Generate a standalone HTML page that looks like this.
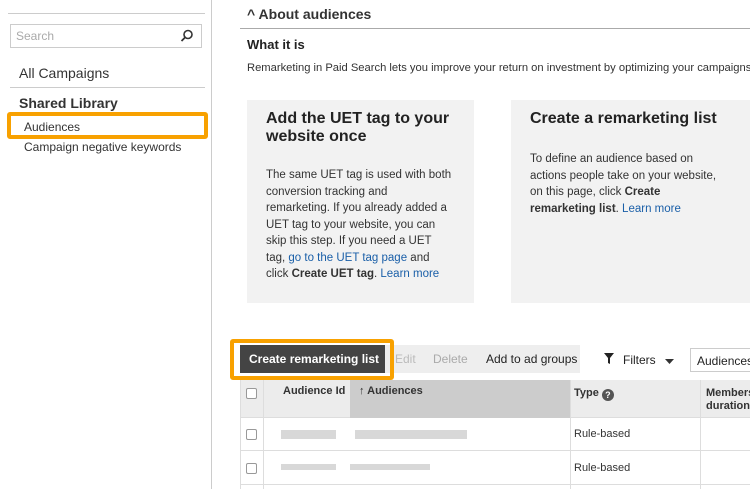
<!DOCTYPE html>
<html><head><style>
*{margin:0;padding:0;box-sizing:border-box}
body{width:750px;height:489px;overflow:hidden;background:#fff;font-family:"Liberation Sans",sans-serif;color:#222;position:relative}
.a{position:absolute}
.side{left:0;top:0;width:212px;height:489px;background:#fff;border-right:1px solid #ccc}
.link{color:#1a5fa8}
.card{background:#f2f2f2;top:100px;height:203px}
.card h2{font-size:16px;font-weight:bold;line-height:18px;color:#222}
.card p{font-size:11.5px;line-height:16.5px;color:#333;white-space:nowrap}
.blur{background:#d8d8d8;height:9px}
.cb{width:11px;height:11px;border:1px solid #999;border-radius:2px;background:#fff}
.hl{border:4px solid #f8a100;border-radius:3px}
</style></head><body>
<div class="a side">
  <div class="a" style="left:8px;top:13px;width:197px;height:1px;background:#ccc"></div>
  <div class="a" style="left:10px;top:24px;width:192px;height:24px;background:#fff;border:1px solid #ccc"></div>
  <div class="a" style="left:16px;top:29px;font-size:12px;color:#aaa">Search</div>
  <svg class="a" style="left:180px;top:29px" width="14" height="14" viewBox="0 0 14 14"><circle cx="8" cy="5.5" r="4" fill="none" stroke="#333" stroke-width="1.6"/><line x1="5" y1="8.5" x2="1.5" y2="12" stroke="#333" stroke-width="1.8"/></svg>
  <div class="a" style="left:19px;top:65px;font-size:14px;color:#333">All Campaigns</div>
  <div class="a" style="left:10px;top:87px;width:195px;height:1px;background:#ccc"></div>
  <div class="a" style="left:19px;top:95px;font-size:14px;font-weight:bold;color:#333">Shared Library</div>
  <div class="a hl" style="left:7px;top:112px;width:201px;height:27px"></div>
  <div class="a" style="left:24px;top:120px;font-size:12px;color:#333">Audiences</div>
  <div class="a" style="left:24px;top:140px;font-size:12px;color:#333">Campaign negative keywords</div>
</div>
<div class="a" style="left:247px;top:6px;font-size:14px;font-weight:bold;color:#333">^ About audiences</div>
<div class="a" style="left:240px;top:28px;width:510px;height:1px;background:#aaa"></div>
<div class="a" style="left:247px;top:37px;font-size:13px;font-weight:bold">What it is</div>
<div class="a" style="left:247px;top:62px;font-size:11.2px;color:#333;white-space:nowrap">Remarketing in Paid Search lets you improve your return on investment by optimizing your campaigns</div>
<div class="a card" style="left:247px;width:227px"><div class="a" style="left:19px;top:10px;width:200px"><h2>Add the UET tag to your website once</h2></div>
<p class="a" style="left:19px;top:67px">The same UET tag is used with both<br>conversion tracking and<br>remarketing. If you already added a<br>UET tag to your website, you can<br>skip this step. If you need a UET<br>tag, <span class="link">go to the UET tag page</span> and<br>click <b>Create UET tag</b>. <span class="link">Learn more</span></p></div>
<div class="a card" style="left:511px;width:239px"><div class="a" style="left:19px;top:10px;width:220px"><h2>Create a remarketing list</h2></div>
<p class="a" style="left:19px;top:51px">To define an audience based on<br>actions people take on your website,<br>on this page, click <b>Create</b><br><b>remarketing list</b>. <span class="link">Learn more</span></p></div>
<div class="a" style="left:240px;top:345px;width:340px;height:28px;background:#eee"></div>
<div class="a" style="left:240px;top:345px;width:145px;height:28px;background:#444"></div>
<div class="a" style="left:249px;top:352px;font-size:12px;font-weight:bold;color:#fff">Create remarketing list</div>
<div class="a hl" style="left:230px;top:339px;width:164px;height:41px"></div>
<div class="a" style="left:395px;top:352px;font-size:12px;color:#bbb">Edit</div>
<div class="a" style="left:433px;top:352px;font-size:12px;color:#aaa">Delete</div>
<div class="a" style="left:486px;top:352px;font-size:12px;color:#222">Add to ad groups</div>
<svg class="a" style="left:604px;top:353px" width="10" height="11" viewBox="0 0 10 11"><path d="M0 0H10L6 5V11L4 10V5Z" fill="#222"/></svg>
<div class="a" style="left:623px;top:353px;font-size:12px">Filters</div>
<svg class="a" style="left:665px;top:359px" width="9" height="5"><path d="M0 0H9L4.5 5Z" fill="#333"/></svg>
<div class="a" style="left:690px;top:348px;width:70px;height:24px;border:1px solid #ccc;font-size:12px;padding:5px 0 0 6px">Audiences</div>
<div class="a" style="left:240px;top:380px;width:510px;height:38px;background:#ececec;border-bottom:1px solid #ddd"></div>
<div class="a" style="left:350px;top:380px;width:220px;height:38px;background:#ccc"></div>
<div class="a" style="left:263px;top:380px;width:1px;height:109px;background:#ddd"></div>
<div class="a" style="left:570px;top:380px;width:1px;height:109px;background:#ddd"></div>
<div class="a" style="left:700px;top:380px;width:1px;height:109px;background:#ddd"></div>
<div class="a" style="left:240px;top:380px;width:1px;height:109px;background:#ddd"></div>
<div class="a cb" style="left:246px;top:388px"></div>
<div class="a" style="left:283px;top:385px;font-size:11px;font-weight:bold;color:#333">Audience Id</div>
<div class="a" style="left:359px;top:385px;font-size:11px;font-weight:bold;color:#333">↑ Audiences</div>
<div class="a" style="left:574px;top:387px;font-size:11px;font-weight:bold;color:#333">Type <span style="display:inline-block;width:12px;height:12px;border-radius:6px;background:#555;color:#fff;font-size:9px;text-align:center;line-height:12px;vertical-align:-2px">?</span></div>
<div class="a" style="left:706px;top:387px;font-size:11px;font-weight:bold;color:#333;line-height:13px">Members<br>duration</div>
<div class="a" style="left:240px;top:450px;width:510px;height:1px;background:#ddd"></div>
<div class="a" style="left:240px;top:484px;width:510px;height:1px;background:#ddd"></div>
<div class="a cb" style="left:246px;top:429px"></div>
<div class="a cb" style="left:246px;top:463px"></div>
<div class="a blur" style="left:281px;top:430px;width:55px"></div>
<div class="a blur" style="left:355px;top:430px;width:112px"></div>
<div class="a blur" style="left:281px;top:464px;width:55px;height:6px"></div>
<div class="a blur" style="left:350px;top:464px;width:80px;height:6px"></div>
<div class="a" style="left:574px;top:428px;font-size:11px;color:#333">Rule-based</div>
<div class="a" style="left:574px;top:462px;font-size:11px;color:#333">Rule-based</div>
</body></html>
